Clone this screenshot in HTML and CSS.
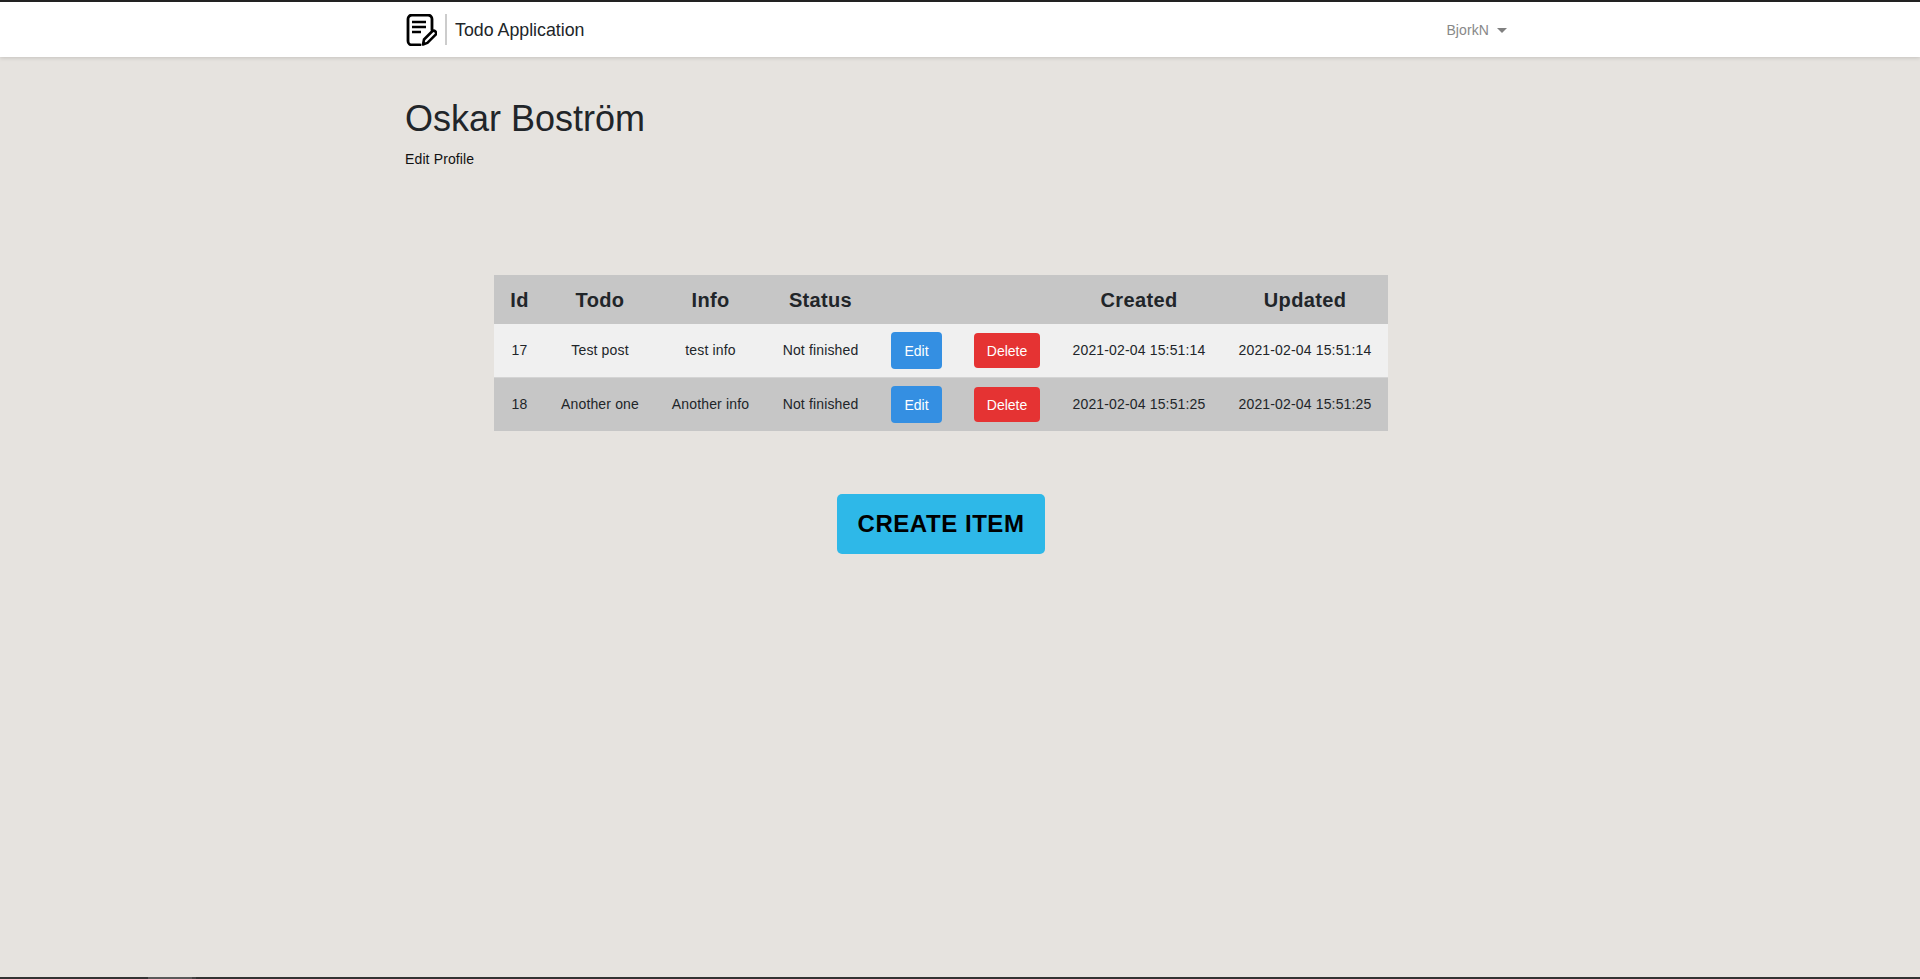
FILE: index.html
```html
<!DOCTYPE html>
<html lang="en">
<head>
    <meta charset="UTF-8">
    <meta name="viewport" content="width=device-width, initial-scale=1.0">
    <title>Todo Application</title>
    <link rel="stylesheet" href="styles.css">
</head>
<body>
    <nav class="navbar">
        <div class="container navbar-inner">
            <a class="brand" href="#">
                <svg class="brand-icon" viewBox="0 0 32 32" width="32" height="32" fill="none" stroke="#000" stroke-linejoin="round">
                    <path d="M27 16V5a4 4 0 0 0-4-4H7a4 4 0 0 0-4 4v22a4 4 0 0 0 4 4h8" stroke-width="2.8" stroke-linecap="round"/>
                    <path d="M7 8h14M7 13h14M7 18h9" stroke-width="2.4"/>
                    <path d="M18 30.5l1-5 8-8a2.4 2.4 0 0 1 3.4 3.4l-8 8z" stroke-width="2.6"/>
                </svg>
                <span class="brand-text">Todo Application</span>
            </a>
            <a class="user-menu" href="#">BjorkN<span class="caret"></span></a>
        </div>
    </nav>

    <main class="container content">
        <h1 class="profile-name">Oskar Boström</h1>
        <a class="profile-link" href="#">Edit Profile</a>

        <div class="todo-section">
            <table class="todo-table">
                <colgroup>
                    <col class="col-id">
                    <col class="col-todo">
                    <col class="col-info">
                    <col class="col-status">
                    <col class="col-edit">
                    <col class="col-delete">
                    <col class="col-date">
                    <col class="col-date">
                </colgroup>
                <thead>
                    <tr>
                        <th>Id</th>
                        <th>Todo</th>
                        <th>Info</th>
                        <th>Status</th>
                        <th></th>
                        <th></th>
                        <th>Created</th>
                        <th>Updated</th>
                    </tr>
                </thead>
                <tbody>
                    <tr class="row-light">
                        <td>17</td>
                        <td>Test post</td>
                        <td>test info</td>
                        <td>Not finished</td>
                        <td class="cell-btn"><button class="btn btn-edit">Edit</button></td>
                        <td class="cell-btn"><button class="btn btn-delete">Delete</button></td>
                        <td>2021-02-04 15:51:14</td>
                        <td>2021-02-04 15:51:14</td>
                    </tr>
                    <tr>
                        <td>18</td>
                        <td>Another one</td>
                        <td>Another info</td>
                        <td>Not finished</td>
                        <td class="cell-btn"><button class="btn btn-edit">Edit</button></td>
                        <td class="cell-btn"><button class="btn btn-delete">Delete</button></td>
                        <td>2021-02-04 15:51:25</td>
                        <td>2021-02-04 15:51:25</td>
                    </tr>
                </tbody>
            </table>

            <button class="btn-create">CREATE ITEM</button>
        </div>
    </main>

    <div class="bottom-bar">
        <span class="bottom-tab"></span>
        <span class="bottom-tab-edge"></span>
    </div>
</body>
</html>
```

FILE: styles.css
```css
* {
    box-sizing: border-box;
}

html, body {
    height: 100%;
}

body {
    display: flex;
    flex-direction: column;
    margin: 0;
    font-family: "Liberation Sans", Arial, sans-serif;
    font-size: 14px;
    color: #212529;
    background-color: #e6e3df;
    overflow: hidden;
}

a {
    text-decoration: none;
}

.container {
    width: 1140px;
    margin: 0 auto;
    padding: 0 15px;
}

.navbar {
    flex: none;
    height: 57px;
    background-color: #ffffff;
    border-top: 2px solid #222222;
    box-shadow: 0 1px 4px rgba(0, 0, 0, 0.15);
}

.navbar-inner {
    display: flex;
    justify-content: space-between;
    align-items: center;
    height: 100%;
}

.brand {
    display: flex;
    align-items: center;
    color: #212529;
}

.brand-icon {
    margin-top: 1px;
}

.brand-text {
    margin-left: 8px;
    padding-left: 8px;
    height: 31px;
    line-height: 33px;
    border-left: 2px solid #cccccc;
    font-size: 17.8px;
}

.user-menu {
    margin-right: 8px;
    color: #888888;
    letter-spacing: 0.1px;
}

.caret {
    display: inline-block;
    margin-left: 8px;
    vertical-align: 2px;
    border-top: 5px solid #808080;
    border-left: 5px solid transparent;
    border-right: 5px solid transparent;
}

.content {
    flex: 1;
    width: 1140px;
}

.profile-name {
    margin: 40px 0 0;
    font-size: 36px;
    font-weight: 400;
    line-height: 43px;
}

.profile-link {
    display: block;
    margin-top: 9px;
    color: #111111;
    line-height: 20px;
    letter-spacing: 0.13px;
}

.todo-section {
    display: flex;
    flex-direction: column;
    align-items: center;
    width: 1072px;
    margin-top: 106px;
}

.todo-table {
    width: 894px;
    table-layout: fixed;
    border-collapse: separate;
    border-spacing: 0;
    text-align: center;
    background-color: #c6c6c6;
}

.col-id { width: 51px; }
.col-todo { width: 110px; }
.col-info { width: 111px; }
.col-status { width: 109px; }
.col-edit { width: 83px; }
.col-delete { width: 98px; }
.col-date { width: 166px; }

.todo-table th {
    padding: 9px 0 7px;
    font-size: 20px;
    line-height: 33px;
    letter-spacing: 0.35px;
}

.todo-table td {
    padding: 7px 0 9px;
    white-space: nowrap;
    letter-spacing: 0.15px;
}

.todo-table td.cell-btn {
    padding: 8px 16px;
}

.todo-table tbody tr + tr td {
    border-top: 1px solid #d4d4d4;
}

.row-light {
    background-color: #f0f0f0;
}

.btn {
    display: block;
    width: 100%;
    padding: 0;
    border: none;
    border-radius: 4px;
    color: #ffffff;
    font-family: inherit;
    font-size: 14px;
    cursor: pointer;
}

.btn-edit {
    height: 37px;
    background-color: #348fe2;
}

.btn-delete {
    height: 35px;
    background-color: #e53333;
}

.btn-create {
    width: 208px;
    height: 60px;
    margin-top: 63px;
    border: none;
    border-radius: 5px;
    background-color: #2eb8e8;
    color: #000000;
    font-family: inherit;
    font-size: 24px;
    font-weight: 700;
    letter-spacing: 0.55px;
    cursor: pointer;
}

.bottom-bar {
    display: flex;
    flex: none;
    height: 2px;
    padding-left: 148px;
    background-color: #333333;
}

.bottom-tab {
    width: 44px;
    background-color: #5a5a5a;
}

.bottom-tab-edge {
    width: 4px;
    background-color: #444444;
}
```
